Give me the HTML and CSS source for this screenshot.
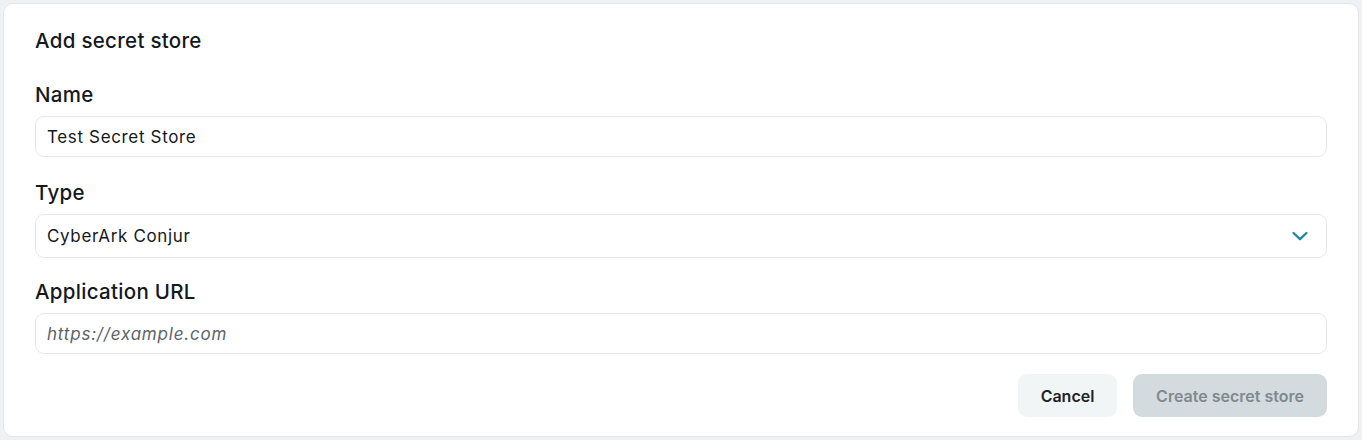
FILE: index.html
```html
<!DOCTYPE html>
<html lang="en">
<head>
<meta charset="utf-8">
<title>Add secret store</title>
<link rel="stylesheet" href="styles.css">
</head>
<body>
<div class="page">
  <form class="card">
    <h2 class="title">Add secret store</h2>
    <div class="field field-name">
      <label class="label">Name</label>
      <div class="input input-text">Test Secret Store</div>
    </div>
    <div class="field field-type">
      <label class="label">Type</label>
      <div class="input input-select">
        <span>CyberArk Conjur</span>
        <svg class="chevron" width="18" height="18" viewBox="0 0 18 18" fill="none"><path d="M2.5 6 L9 12.2 L15.5 6" stroke="#1b87a6" stroke-width="2.3" stroke-linecap="round" stroke-linejoin="round"/></svg>
      </div>
    </div>
    <div class="field field-url">
      <label class="label">Application URL</label>
      <div class="input input-text placeholder">https://example.com</div>
    </div>
    <div class="actions">
      <button type="button" class="btn btn-cancel">Cancel</button>
      <button type="button" class="btn btn-primary" disabled>Create secret store</button>
    </div>
  </form>
</div>
</body>
</html>
```

FILE: styles.css
```css
* { box-sizing: border-box; }
html, body { margin: 0; padding: 0; }
body {
  background: #eef2f4;
  font-family: Inter, "Noto Sans", sans-serif;
  color: #15191c;
}
.page {
  padding: 3px;
  height: 440px;
}
.card {
  background: #ffffff;
  border: 1px solid #e3e7ea;
  border-radius: 10px;
  height: 434px;
  padding: 23px 31px 19px 31px;
  display: flex;
  flex-direction: column;
}
.title {
  margin: 0;
  font-size: 20.5px;
  line-height: 28px;
  font-weight: 500;
  letter-spacing: 0.3px;
}
.field {
  display: flex;
  flex-direction: column;
}
.field-name { margin-top: 26px; }
.field-type { margin-top: 22px; }
.field-url { margin-top: 20px; }
.label {
  font-size: 20.5px;
  line-height: 28px;
  font-weight: 500;
  letter-spacing: 0.3px;
  margin-bottom: 7px;
}
.input {
  border: 1px solid #e5e8ea;
  border-radius: 9px;
  padding: 0 11px;
  font-size: 17px;
  letter-spacing: 0.65px;
  color: #15191c;
  display: flex;
  align-items: center;
}
.input-text { height: 41px; }
.input-select {
  height: 44px;
  justify-content: space-between;
  padding-right: 17px;
}
.placeholder {
  font-style: italic;
  color: #5b646b;
  letter-spacing: 0.8px;
}
.chevron { display: block; }
.actions {
  margin-top: auto;
  display: flex;
  justify-content: flex-end;
  gap: 16px;
}
.btn {
  font-family: Inter, "Noto Sans", sans-serif;
  font-size: 16px;
  font-weight: 600;
  height: 43px;
  border: none;
  border-radius: 9px;
  padding: 0 22px;
}
.btn-cancel {
  background: #f2f5f6;
  color: #1e2326;
  width: 99px;
}
.btn-primary {
  background: #d4dbde;
  color: #7f898e;
  width: 194px;
}
```
